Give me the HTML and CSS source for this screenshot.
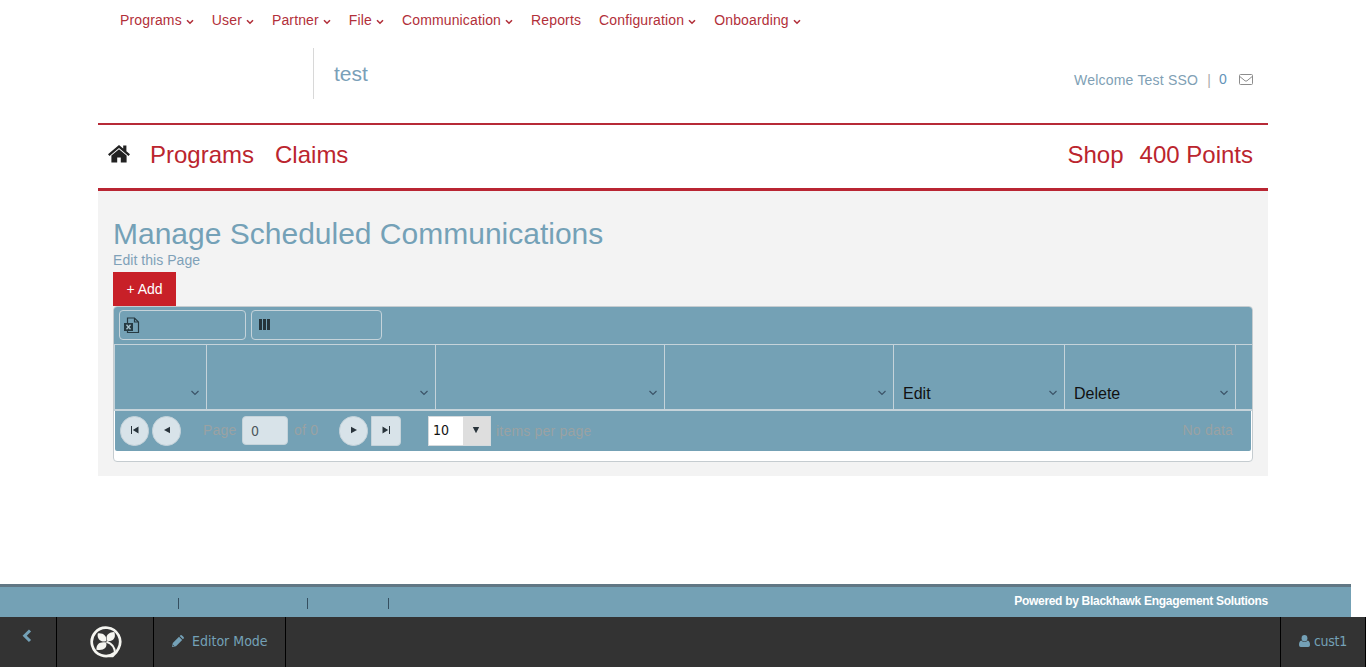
FILE: index.html
```
<!DOCTYPE html>
<html lang="en">
<head>
<meta charset="utf-8">
<title>Manage Scheduled Communications</title>
<link rel="stylesheet" href="styles.css">
</head>
<body>
<svg width="0" height="0" class="defs">
  <symbol id="caret" viewBox="0 0 8 6"><path d="M1 1.2 4 4.2 7 1.2" fill="none" stroke="currentColor" stroke-width="1.6"/></symbol>
  <symbol id="chev" viewBox="0 0 8 6"><path d="M.5 1 4 4.4 7.5 1" fill="none" stroke="currentColor" stroke-width="1.2"/></symbol>
</svg>
<div class="page">
  <nav class="menu">
    <a>Programs<svg><use href="#caret"/></svg></a>
    <a>User<svg><use href="#caret"/></svg></a>
    <a>Partner<svg><use href="#caret"/></svg></a>
    <a>File<svg><use href="#caret"/></svg></a>
    <a>Communication<svg><use href="#caret"/></svg></a>
    <a>Reports</a>
    <a>Configuration<svg><use href="#caret"/></svg></a>
    <a>Onboarding<svg><use href="#caret"/></svg></a>
  </nav>
  <header class="header">
    <div class="brand">test</div>
    <div class="welcome">
      <span>Welcome Test SSO</span><span class="sep">|</span><span class="count">0</span>
      <svg width="14" height="11" viewBox="0 0 14 11" fill="none" stroke="#8c8c8c"><rect x=".5" y=".5" width="13" height="10" rx="1"/><path d="M.8 2.5 6 6.8Q7 7.5 8 6.8L13.2 2.5"/></svg>
    </div>
  </header>
  <nav class="mainnav">
    <svg width="22" height="18" viewBox="0 0 22 18" fill="#222"><path d="M11 0 0 9.2 1.500 11 11 3.1 20.500 11 22 9.2 18.400 6.200V.5H15.2V3.5Z"/><path d="M11 4.200 3.400 10.500V17.400H9.200V12.500H12.800V17.400H18.600V10.500Z"/></svg>
    <a class="programs">Programs</a><a>Claims</a>
    <a class="shop">Shop</a><a class="points">400 Points</a>
  </nav>
  <main class="content">
    <h1>Manage Scheduled Communications</h1>
    <a class="editpage">Edit this Page</a>
    <a class="add">+ Add</a>
    <section class="grid">
      <div class="toolbar">
        <span class="tool excel"><svg width="16" height="17" viewBox="0 0 16 17"><path d="M3.5 6V1H10.5L14.5 5V15.5H3.5V14M10.5 1V5H14.5" fill="none" stroke="#263a42" stroke-width="1.2"/><path d="M0 6H9V14H0Z" fill="#263a42"/><path d="M2.5 7.8 6.5 12.2M6.5 7.8 2.5 12.2" stroke="#a9c3ce" stroke-width="1.3"/></svg></span>
        <span class="tool columns"><svg width="11" height="11" viewBox="0 0 11 11" fill="#26343a"><path d="M0 0H3V11H0ZM4 0H7V11H4ZM8 0H11V11H8Z"/></svg></span>
      </div>
      <div class="heads">
        <div><svg><use href="#chev"/></svg></div>
        <div><svg><use href="#chev"/></svg></div>
        <div><svg><use href="#chev"/></svg></div>
        <div><svg><use href="#chev"/></svg></div>
        <div>Edit<svg><use href="#chev"/></svg></div>
        <div>Delete<svg><use href="#chev"/></svg></div>
        <div></div>
      </div>
      <div class="pager">
        <span class="btn"><svg viewBox="0 0 8 8"><path d="M0 0H1V8H0ZM7.5 .5V7.5L1.8 4Z"/></svg></span>
        <span class="btn prev"><svg viewBox="0 0 8 8"><path d="M7 .7V7.3L1 4Z"/></svg></span>
        <span class="label page-label">Page</span>
        <span class="pageno">0</span>
        <span class="label of-label">of 0</span>
        <span class="btn"><svg viewBox="0 0 8 8"><path d="M1 .7V7.3L7 4Z"/></svg></span>
        <span class="btn last"><svg viewBox="0 0 8 8"><path d="M7 0H8V8H7ZM.5 .5V7.5L6.2 4Z"/></svg></span>
        <span class="select"><span>10</span><i><svg viewBox="0 0 8 8"><path d="M.8 1H7.2L4 7.2Z"/></svg></i></span>
        <span class="label items">items per page</span>
        <span class="label nodata">No data</span>
      </div>
    </section>
  </main>
</div>
<footer class="footer">
  <span class="bars"><i></i><i></i><i></i></span>
  <strong>Powered by Blackhawk Engagement Solutions</strong>
</footer>
<div class="admin">
  <div class="back"><svg width="10" height="14" viewBox="0 0 10 14"><path d="M8 1.500 2.700 6.700 8 12" fill="none" stroke="#74a1b7" stroke-width="3"/></svg></div>
  <div class="logo"><svg width="32" height="32" viewBox="0 0 32 32"><path d="M24.500 27.200A14.200 14.200 0 1 1 28.500 22.500Q27 26 22.500 30H16" fill="none" stroke="#f5f5f0" stroke-width="2.700"/><g fill="#f5f5f0"><path d="M16.300 15.300C10 16.200 6.800 12.500 7.800 7.400C13.500 6.800 17 10 16.300 15.300Z"/><path d="M17.500 15.200C14.800 10 18 6.400 24.300 6C26.200 11.500 23.500 15.600 17.500 15.200Z"/><path d="M16.200 16.600C17.500 22.500 13.200 24.800 6.400 23.700C6.200 18 10 15.200 16.200 16.600Z"/></g><path d="M16.500 15.800Q25 18.500 25 27.500" fill="none" stroke="#f5f5f0" stroke-width="2.200"/></svg></div>
  <div class="mode"><svg width="12" height="12" viewBox="0 0 12 12" fill="#74a1b7"><path d="M0 12 .8 8 7 1.800 10.200 5 4 11.200ZM7.700 1.100 8.500.3Q9.300-.2 10 .4L11.600 2Q12.200 2.700 11.700 3.500L10.900 4.300Z"/><path d="M1 10.200 1.800 11" stroke="#333"/></svg>Editor Mode</div>
  <div class="user"><svg width="11" height="12" viewBox="0 0 11 12" fill="#74a1b7"><ellipse cx="5.500" cy="3.200" rx="2.900" ry="3.200"/><path d="M2.300 5.500Q5.500 8.500 8.700 5.500 11 6 11 10 11 12 9.200 12H1.800Q0 12 0 10 0 6 2.300 5.500Z"/></svg>cust1</div>
</div>
</body>
</html>
```
FILE: styles.css
```
* { box-sizing: border-box; }
body {
  margin: 0;
  height: 667px;
  overflow: hidden;
  background: #fff;
  font: 14px/20px "Liberation Sans", Arial, sans-serif;
  color: #7aa0b8;
}
svg { display: block; flex: none; }
.defs { position: absolute; }
.page { width: 1170px; height: 584px; margin-left: 98px; }

.menu { display: flex; align-items: flex-start; gap: 18px; height: 40px; padding: 10px 0 0 22px; letter-spacing: .14px; color: #b2303a; }
.menu a { display: flex; align-items: center; }
.menu svg { width: 8px; height: 6px; margin: 4px 0 0 4px; }

.header { display: flex; height: 83px; padding: 8px 15px 0 215px; }
.brand { height: 51px; padding: 14px 0 0 20px; border-left: 1px solid #d8d8d8; font-size: 21px; line-height: 23px; }
.welcome { display: flex; margin: 22px 0 0 auto; letter-spacing: .2px; color: #809fb5; }
.welcome .sep { margin: 0 8px 0 9px; color: #aaa; }
.welcome .count { margin-right: 12px; margin-top: -1px; color: #6393b9; }
.welcome svg { margin-top: 4px; }

.mainnav {
  display: flex;
  height: 68px;
  padding: 16px 15px 0 11px;
  border-top: 2px solid #b72a37;
  border-bottom: 3px solid #b92532;
  font-size: 24px;
  line-height: 28px;
  color: #bb252e;
}
.mainnav svg { margin: 4px 0 0 -1px; }
.mainnav .programs { margin: 0 21px 0 20px; }
.mainnav .shop { margin-left: auto; }
.mainnav .points { margin-left: 16px; }

.content { height: 285px; padding: 26px 15px 0; background: #f3f3f3; }
h1 { margin: 0; font-size: 30px; font-weight: 400; line-height: 33px; color: #74a1b7; }
.editpage { display: block; height: 22px; line-height: 20px; letter-spacing: .05px; color: #7fa1b8; }
.add { display: block; width: 63px; height: 34px; background: #c82028; color: #fff; line-height: 34px; text-align: center; }

.grid { height: 156px; border: 1px solid #c5ccd0; border-radius: 4px; background: #fff; overflow: hidden; }
.toolbar { display: flex; gap: 5px; height: 37px; padding: 3px 5px; background: #74a1b5; }
.tool { width: 127px; height: 30px; padding: 6px 0 0 4px; border: 1px solid #c5d3da; border-radius: 4px; }
.tool.columns { width: 131px; padding: 8px 0 0 7px; }
.heads {
  display: grid;
  grid-template-columns: 92px 229px 229px 229px 171px 171px 17px;
  height: 67px;
  border-top: 1px solid #c5d3da;
  border-bottom: 2px solid #c5d3da;
  border-left: 1px solid #c5d3da;
  background: #74a1b5;
  font-size: 16px;
  color: #111;
}
.heads div { display: flex; padding: 39px 8px 0 9px; border-right: 1px solid #c5d3da; }
.heads div:last-child { border: 0; }
.heads svg { width: 8px; height: 6px; margin: 6px -1px 0 auto; color: #3c5368; }

.pager { display: flex; height: 40px; margin: 0 1px; padding: 5px 18px 0 5px; border-radius: 0 0 2px 2px; background: #74a1b5; }
.btn { display: flex; align-items: center; justify-content: center; width: 29px; height: 30px; border-radius: 15px; background: #d8e3e9; border: 1px solid #c5d3da; }
.pager svg { width: 8px; height: 8px; fill: #29343b; margin-bottom: 2px; }
.prev { margin-left: 3px; }
.label { line-height: 29px; letter-spacing: .2px; color: #9aa2a3; }
.page-label { width: 39px; margin-left: 22px; }
.pageno { width: 46px; height: 29px; padding: 0 8px; border: 1px solid #c5d3da; border-radius: 4px; background: #d8e3e9; color: #4b545a; font: 14px/29px "DejaVu Sans Condensed", "DejaVu Sans", sans-serif; }
.of-label { width: 45px; margin-left: 6px; }
.last { width: 30px; margin-left: 3px; border-radius: 0 4px 4px 0; }
.select { display: flex; width: 63px; height: 30px; margin: 0 5px 0 27px; border: 1px solid #d5dadd; background: #fff; color: #111; font: 14px/27px "DejaVu Sans Condensed", "DejaVu Sans", sans-serif; }
.select span { width: 34px; padding-left: 4px; font-stretch: condensed; }
.select i { display: flex; flex: 1; align-items: center; padding-left: 9px; background: #dedede; }
.items { padding-top: 1px; }
.nodata { margin-left: auto; }

.footer { display: flex; width: 1351px; height: 33px; border-top: 3px solid #617784; background: #74a1b5; }
.footer strong { margin: 4px 83px 0 auto; font-size: 12px; letter-spacing: -.3px; color: #fff; }
.bars { display: flex; padding: 11px 0 0 178px; }
.bars i { width: 1px; height: 11px; background: #354f60; }
.bars i + i { margin-left: 128px; }
.bars i:last-child { margin-left: 80px; }

.admin { display: flex; height: 50px; background: #333; color: #74a1b7; font: 14px/48px "DejaVu Sans Condensed", "DejaVu Sans", sans-serif; font-stretch: condensed; }
.admin > div { display: flex; border-right: 1px solid #000; }
.admin .back { width: 57px; padding: 12px 0 0 22px; }
.admin .logo { width: 97px; padding: 9px 0 0 33px; }
.admin .mode { width: 132px; padding-left: 18px; }
.mode svg { margin: 18px 8px 0 0; }
.admin .user { width: 86px; margin-left: auto; padding-left: 18px; border-left: 1px solid #000; letter-spacing: -.3px; }
.user svg { margin: 18px 4px 0 0; }
```
